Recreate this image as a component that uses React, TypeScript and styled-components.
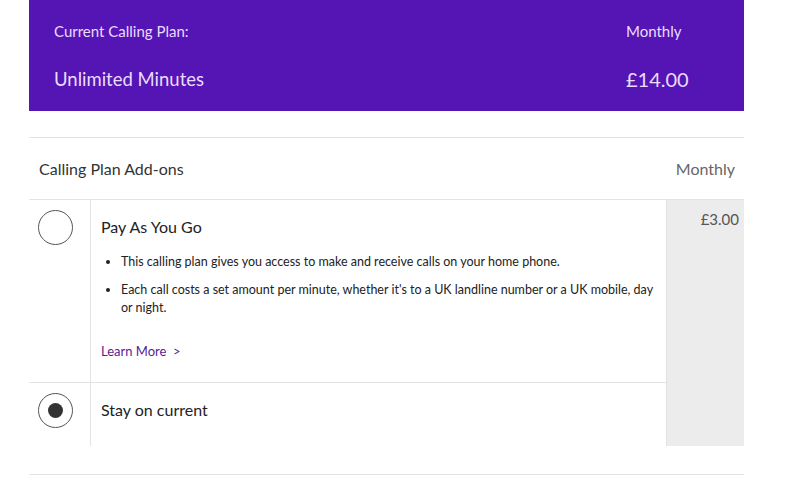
import styled, { createGlobalStyle } from 'styled-components';

const GlobalStyle = createGlobalStyle`
  body {
    margin: 0;
    background: #fff;
    font-family: Lato, "Open Sans", sans-serif;
    color: #333;
  }
`;

const Page = styled.div`
  width: 715px;
  padding-left: 29px;
`;

const PlanBanner = styled.div`
  background: #5514b4;
  height: 111px;
  box-sizing: border-box;
  padding: 20px 0 0 25px;
  display: grid;
  grid-template-columns: 1fr 118px;
  grid-template-rows: 22px 28px;
  row-gap: 23px;
  color: #eadcff;
`;

const BannerLabel = styled.div`
  font-size: 15px;
  line-height: 22px;
`;

const BannerValue = styled.div<{ $size: number }>`
  font-size: ${(p) => p.$size}px;
  line-height: 28px;
`;

const AddOns = styled.section`
  margin-top: 26px;
  border-top: 1px solid #e3e3e3;
  border-bottom: 1px solid #e3e3e3;
  padding-bottom: 28px;
`;

const AddOnsHeader = styled.div`
  height: 61px;
  display: flex;
  align-items: center;
  justify-content: space-between;
  padding: 0 9px 0 10px;
  border-bottom: 1px solid #e3e3e3;
  font-size: 16px;
  color: #333;
`;

const HeaderPeriod = styled.span`
  color: #666;
`;

const OptionRow = styled.div<{ $height: number }>`
  display: grid;
  grid-template-columns: 61px 1fr 78px;
  min-height: ${(p) => p.$height}px;
`;

const RadioCell = styled.div<{ $last?: boolean }>`
  padding: 10px 0 0 9px;
  border-bottom: ${(p) => (p.$last ? 'none' : '1px solid #e3e3e3')};
`;

const Radio = styled.span<{ $checked?: boolean }>`
  display: flex;
  align-items: center;
  justify-content: center;
  width: 35px;
  height: 35px;
  box-sizing: border-box;
  border: 1.5px solid #555;
  border-radius: 50%;

  &::after {
    content: '';
    display: ${(p) => (p.$checked ? 'block' : 'none')};
    width: 15px;
    height: 15px;
    border-radius: 50%;
    background: #333;
  }
`;

const DetailCell = styled.div<{ $last?: boolean }>`
  border-left: 1px solid #e3e3e3;
  border-bottom: ${(p) => (p.$last ? 'none' : '1px solid #e3e3e3')};
  padding: 16px 10px 0 10px;
`;

const OptionTitle = styled.div`
  font-size: 16px;
  line-height: 22px;
  color: #222;
`;

const Bullets = styled.ul`
  margin: 15px 0 0;
  padding: 0 0 0 20px;
  font-size: 12.5px;
  line-height: 18px;
  color: #222;

  li {
    margin-bottom: 10px;
  }
`;

const LearnMore = styled.a`
  display: inline-block;
  margin-top: 15px;
  font-size: 13px;
  line-height: 18px;
  color: #5a1a9a;
  text-decoration: none;
`;

const PriceCell = styled.div`
  background: #ececec;
  border-left: 1px solid #e2e2e2;
  text-align: right;
  padding: 9px 5px 0 0;
  font-size: 15px;
  line-height: 20px;
  color: #555;
`;

export default function App() {
  return (
    <>
      <GlobalStyle />
      <Page>
        <PlanBanner>
          <BannerLabel>Current Calling Plan:</BannerLabel>
          <BannerLabel>Monthly</BannerLabel>
          <BannerValue $size={18.5}>Unlimited Minutes</BannerValue>
          <BannerValue $size={20}>£14.00</BannerValue>
        </PlanBanner>

        <AddOns>
          <AddOnsHeader>
            <span>Calling Plan Add-ons</span>
            <HeaderPeriod>Monthly</HeaderPeriod>
          </AddOnsHeader>

          <OptionRow $height={183}>
            <RadioCell>
              <Radio />
            </RadioCell>
            <DetailCell>
              <OptionTitle>Pay As You Go</OptionTitle>
              <Bullets>
                <li>This calling plan gives you access to make and receive calls on your home phone.</li>
                <li>
                  Each call costs a set amount per minute, whether it's to a UK landline number or a UK
                  mobile, day or night.
                </li>
              </Bullets>
              <LearnMore href="#">Learn More &nbsp;&gt;</LearnMore>
            </DetailCell>
            <PriceCell>£3.00</PriceCell>
          </OptionRow>

          <OptionRow $height={63}>
            <RadioCell $last>
              <Radio $checked />
            </RadioCell>
            <DetailCell $last>
              <OptionTitle>Stay on current</OptionTitle>
            </DetailCell>
            <PriceCell />
          </OptionRow>
        </AddOns>
      </Page>
    </>
  );
}
